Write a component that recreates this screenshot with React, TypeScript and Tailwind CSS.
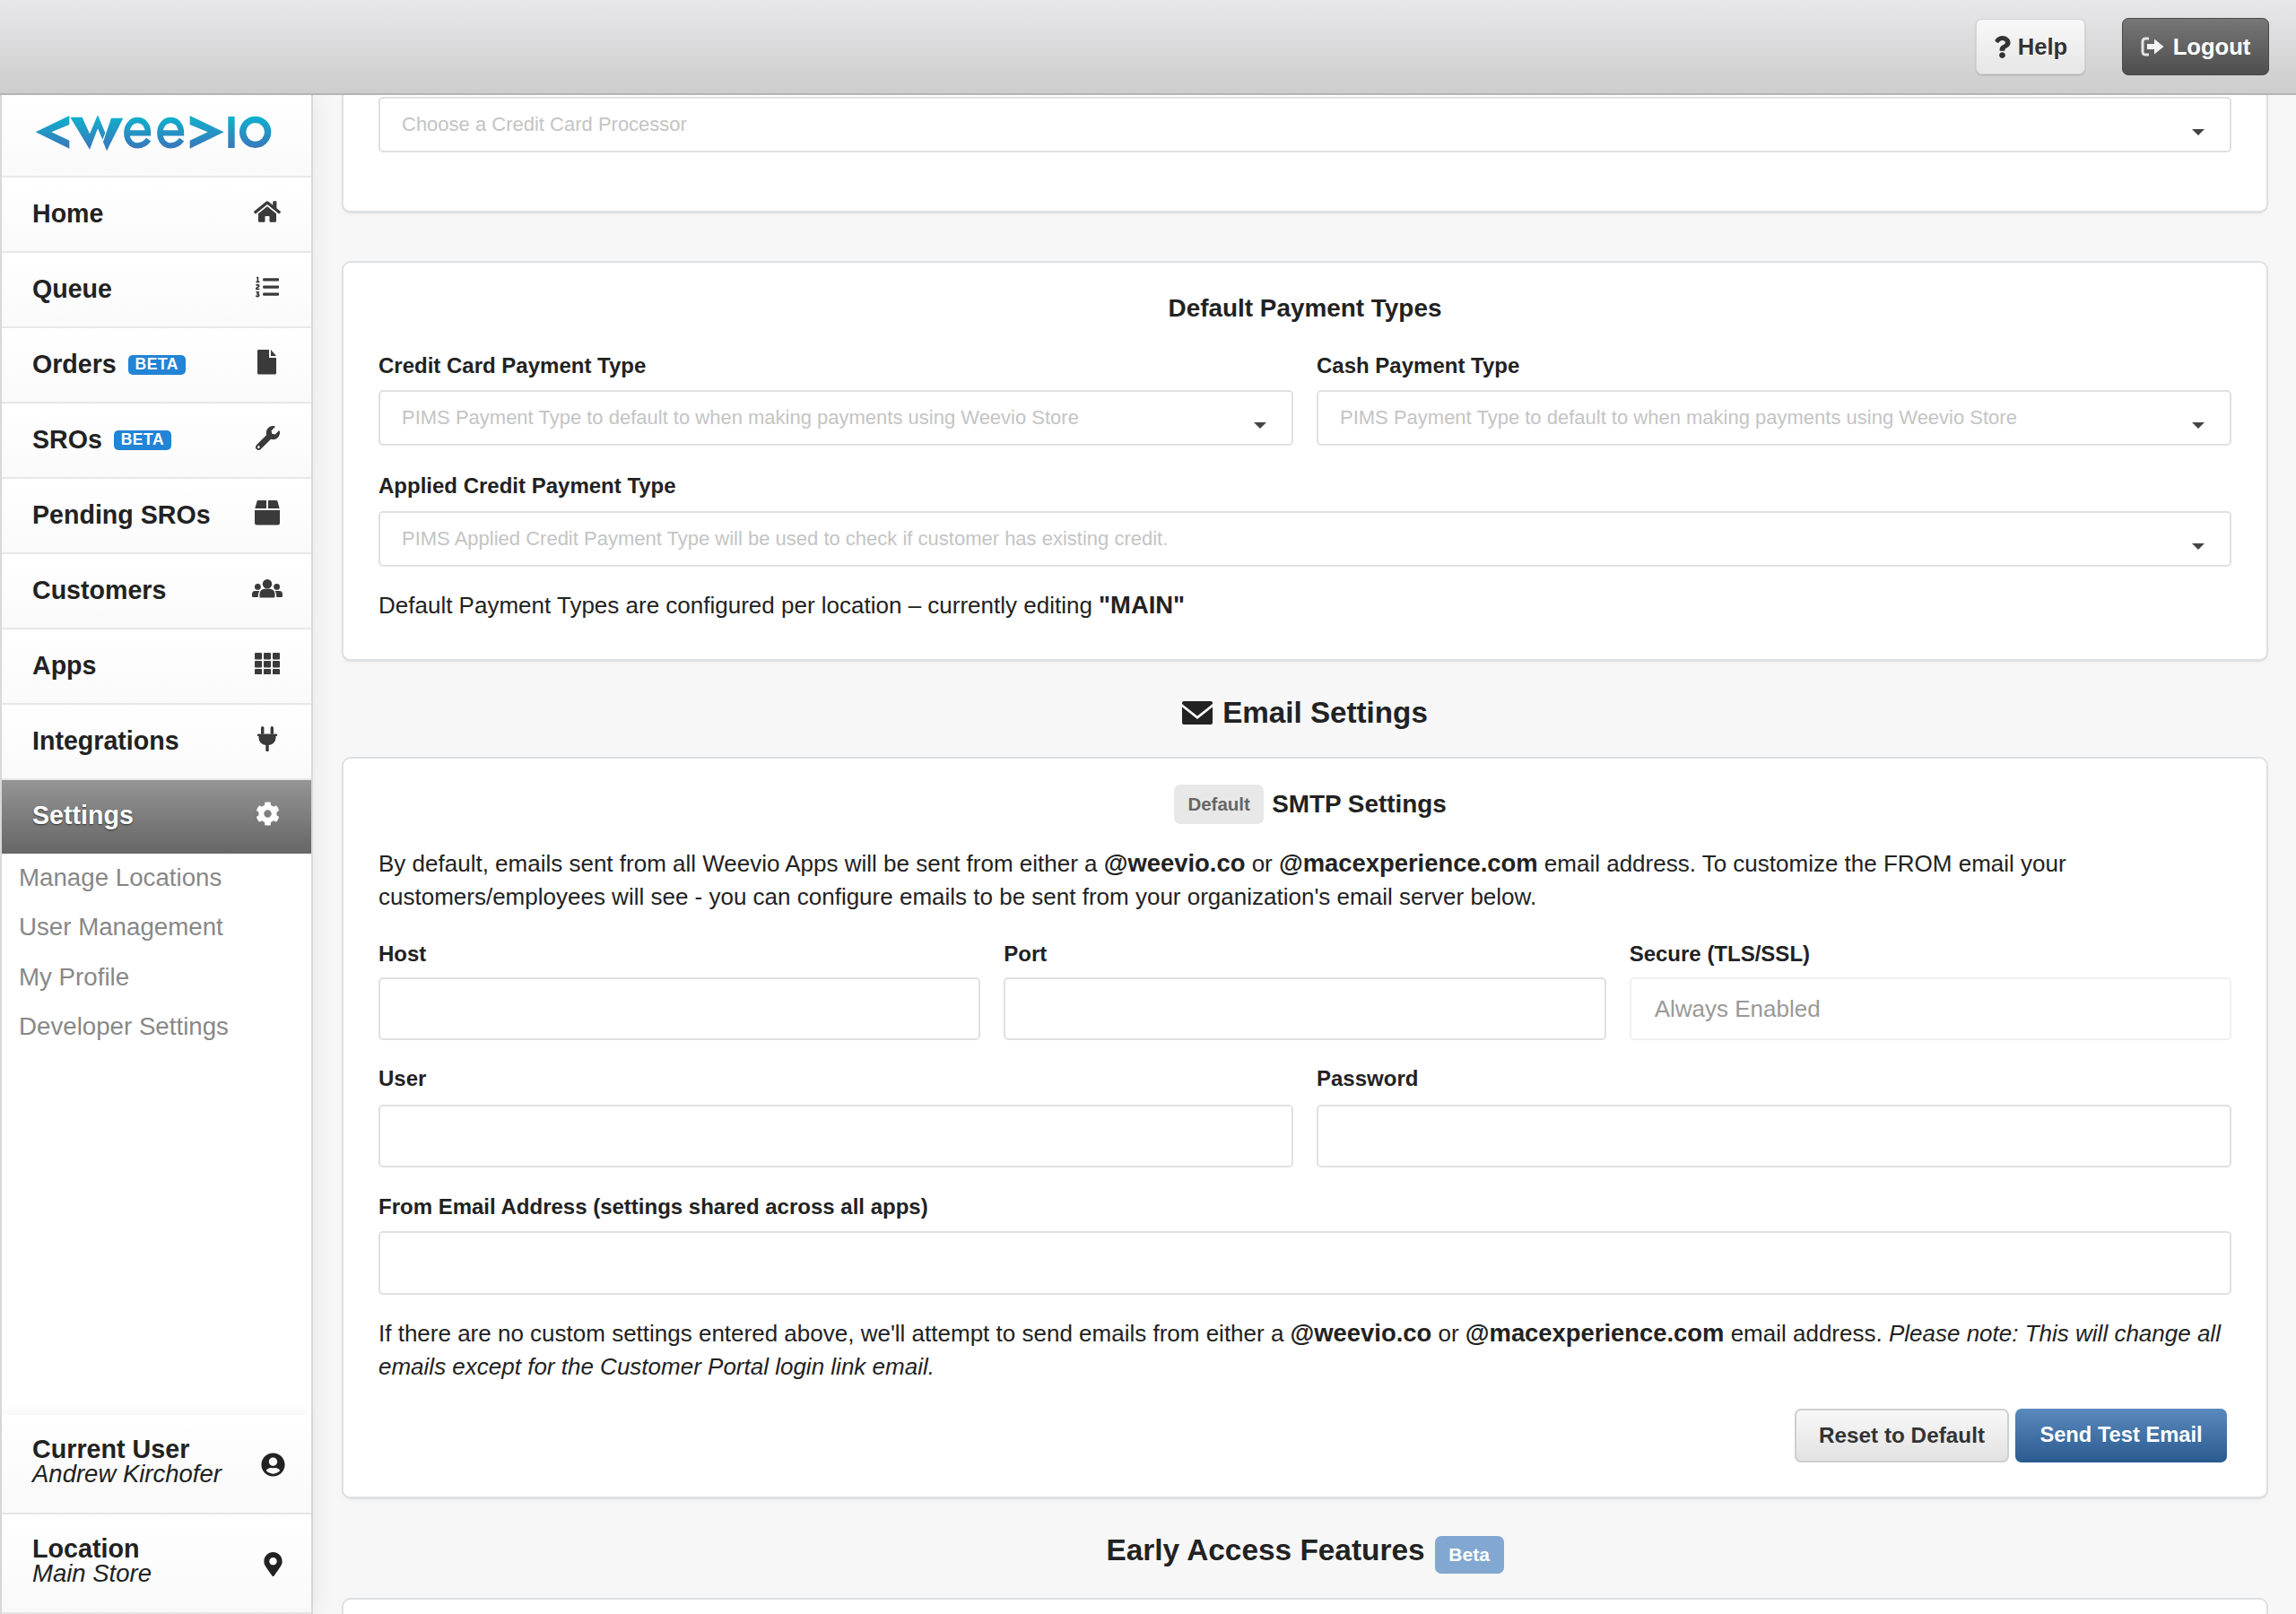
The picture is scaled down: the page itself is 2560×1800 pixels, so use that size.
import { FaCog, FaHome, FaListOl, FaMapMarkerAlt, FaQuestion, FaUserCircle, FaWrench } from 'react-icons/fa';
import type { ReactNode } from 'react';

function FileIcon() {
  return (
    <svg viewBox="0 0 22 28" className="h-[28px] w-[22px] shrink-0" fill="currentColor">
      <path d="M1 0H13V9H21V26a1.5 1.5 0 0 1-1.5 1.5H1.5A1.5 1.5 0 0 1 0 26V1A1 1 0 0 1 1 0Z" />
      <path d="M15 0L21 7H15Z" />
    </svg>
  );
}

function BoxIcon() {
  return (
    <svg viewBox="0 0 28 28" className="h-[28px] w-[28px] shrink-0" fill="currentColor">
      <path d="M4 0H13V9H0.3L2.5 1.2A1.8 1.8 0 0 1 4 0Z" />
      <path d="M15 0H24A1.8 1.8 0 0 1 25.5 1.2L27.7 9H15Z" />
      <path d="M0 11H28V25a2.5 2.5 0 0 1-2.5 2.5H2.5A2.5 2.5 0 0 1 0 25Z" />
    </svg>
  );
}

function UsersIcon() {
  return (
    <svg viewBox="0 0 34 21" className="h-[21px] w-[34px] shrink-0" fill="currentColor">
      <circle cx="17" cy="5.2" r="5.2" />
      <path d="M8.5 20.5V16a5.5 5.5 0 0 1 5.5-5.2h6a5.5 5.5 0 0 1 5.5 5.2v3a1.5 1.5 0 0 1-1.5 1.5Z" />
      <circle cx="6.4" cy="8.4" r="3.4" />
      <circle cx="27.6" cy="8.4" r="3.4" />
      <path d="M0 19v-2.5a3.6 3.6 0 0 1 3.6-3.4h4.8A7.5 7.5 0 0 0 6.8 18v2H1a1 1 0 0 1-1-1Z" />
      <path d="M34 19v-2.5a3.6 3.6 0 0 0-3.6-3.4h-4.8a7.5 7.5 0 0 1 1.6 4.9v2h5.8a1 1 0 0 0 1-1Z" />
    </svg>
  );
}

function GridIcon() {
  const cells = [0, 10, 20].flatMap((y) => [0, 10, 20].map((x) => [x, y]));
  return (
    <svg viewBox="0 0 28 24" className="h-[24px] w-[28px] shrink-0" fill="currentColor">
      {cells.map(([x, y]) => (
        <rect key={`${x}-${y}`} x={x} y={y - (y / 10) * 1} width="8" height="7.4" rx="1" />
      ))}
    </svg>
  );
}

function PlugIcon() {
  return (
    <svg viewBox="0 0 22 28" className="h-[28px] w-[22px] shrink-0" fill="currentColor">
      <rect x="4" y="0" width="3.4" height="9" rx="1.7" />
      <rect x="14.6" y="0" width="3.4" height="9" rx="1.7" />
      <path d="M0.8 8.5H21.2A0.8 0.8 0 0 1 22 9.3V11H20.5V13a8 8 0 0 1-7.8 7.9V27a0.9 0.9 0 0 1-0.9 0.9H10.2a0.9 0.9 0 0 1-0.9-0.9V20.9A8 8 0 0 1 1.5 13V11H0V9.3A0.8 0.8 0 0 1 0.8 8.5Z" />
    </svg>
  );
}

function MailIcon() {
  return (
    <svg viewBox="0 0 34 26" className="h-[26px] w-[34px] shrink-0" fill="currentColor">
      <path d="M2 0H32a2 2 0 0 1 2 2V3L17 16.5 0 3V2A2 2 0 0 1 2 0Z" />
      <path d="M0 6.5L17 20 34 6.5V24a2 2 0 0 1-2 2H2a2 2 0 0 1-2-2Z" />
    </svg>
  );
}

function LogoutIcon() {
  return (
    <svg viewBox="0 0 26 22" className="h-[22px] w-[26px] shrink-0" fill="none">
      <path d="M9 2H5a3 3 0 0 0-3 3v12a3 3 0 0 0 3 3h4" stroke="#e4e4e4" strokeWidth="3" />
      <path d="M7 8H15V2.5L25.5 11 15 19.5V14H7Z" fill="#f4f4f4" />
    </svg>
  );
}

function WeevioLogo() {
  return (
    <svg viewBox="0 0 870 195" className="h-[65px] w-[290px] shrink-0">
      <defs>
        <linearGradient id="logoGrad" gradientUnits="userSpaceOnUse" x1="0" y1="40" x2="0" y2="155">
          <stop offset="0" stopColor="#0db4ce" />
          <stop offset="1" stopColor="#3b74ba" />
        </linearGradient>
      </defs>
      <g fill="url(#logoGrad)">
        <path d="M32 97L145 42V72L85 97L145 125V152Z" />
        <path d="M148 47H188L213 103L240 40L265 100L256 122L240 85L213 155Z" />
        <path d="M285 50H325L270 160L258 130Z" />
        <path d="M548 42L662 97L548 152V125L608 97L548 72Z" />
        <rect x="676" y="45" width="22" height="105" />
      </g>
      <g fill="none" stroke="url(#logoGrad)" strokeWidth="19">
        <path d="M337 100H408C408 74 394 57 373 57C352 57 337 76 337 100C337 125 352 142 373 142C388 142 400 136 410 122" />
        <path d="M448 100H519C519 74 505 57 484 57C463 57 448 76 448 100C448 125 463 142 484 142C499 142 511 136 521 122" />
        <circle cx="767" cy="97" r="42" strokeWidth="22" />
      </g>
    </svg>
  );
}

function BetaTag({ children }: { children: ReactNode }) {
  return (
    <span className="ml-[13px] flex h-[22px] w-[64px] items-center justify-center rounded-[5px] bg-[#2284d5] text-[17.5px] font-bold tracking-[0.5px] text-white">
      {children}
    </span>
  );
}

const navItems: { label: string; beta?: boolean; icon: ReactNode }[] = [
  { label: 'Home', icon: <FaHome className="h-[30px] w-[30px] shrink-0" /> },
  { label: 'Queue', icon: <FaListOl className="h-[26px] w-[28px] shrink-0" /> },
  { label: 'Orders', beta: true, icon: <FileIcon /> },
  { label: 'SROs', beta: true, icon: <FaWrench className="h-[27px] w-[27px] shrink-0 -scale-x-100 rotate-90" /> },
  { label: 'Pending SROs', icon: <BoxIcon /> },
  { label: 'Customers', icon: <UsersIcon /> },
  { label: 'Apps', icon: <GridIcon /> },
  { label: 'Integrations', icon: <PlugIcon /> },
];

const subItems = ['Manage Locations', 'User Management', 'My Profile', 'Developer Settings'];

function Sidebar() {
  return (
    <aside className="relative z-10 flex h-full w-[349px] shrink-0 flex-col border-x-2 border-[#d9d9d9] bg-white shadow-[4px_0_22px_rgba(0,0,0,0.06)]">
      <div className="flex h-[92px] shrink-0 items-center justify-center border-b-2 border-[#e8e8e8] bg-gradient-to-b from-white to-[#fafafa] pb-[8px] pr-[2px]">
        <WeevioLogo />
      </div>
      {navItems.map((item) => (
        <div
          key={item.label}
          className="flex h-[84px] shrink-0 items-center border-b-2 border-[#e8e8e8] bg-gradient-to-b from-white to-[#fafafa] pb-[1px] pl-[34px] text-[#222222]"
        >
          <span className="text-[28.6px] font-bold">{item.label}</span>
          {item.beta && <BetaTag>BETA</BetaTag>}
          <span className="mb-[5px] ml-auto mr-[34px] flex w-[30px] justify-center text-[#3a3a3a]">{item.icon}</span>
        </div>
      ))}
      <div className="flex h-[82px] shrink-0 items-center bg-gradient-to-b from-[#959595] to-[#666666] pb-[4px] pl-[34px]">
        <span className="text-[28.6px] font-bold text-white [text-shadow:0_1px_2px_rgba(0,0,0,0.6)]">Settings</span>
        <span className="mb-[4px] ml-auto mr-[34px] flex w-[30px] justify-center text-white">
          <FaCog className="h-[27px] w-[27px] shrink-0" />
        </span>
      </div>
      <div className="-mt-px flex flex-col pl-[19px] text-[27.7px] text-[#888888]">
        {subItems.map((s) => (
          <div key={s} className="flex h-[55.5px] items-center">{s}</div>
        ))}
      </div>
      <div className="flex-1" />
      <div className="shadow-[0_-6px_12px_rgba(0,0,0,0.03)]">
        <FooterRow title="Current User" value="Andrew Kirchofer" icon={<FaUserCircle className="h-[27px] w-[27px] shrink-0" />} />
        <FooterRow title="Location" value="Main Store" icon={<FaMapMarkerAlt className="h-[27px] w-[27px] shrink-0" />} />
      </div>
    </aside>
  );
}

function FooterRow({ title, value, icon }: { title: string; value: string; icon: ReactNode }) {
  return (
    <div className="flex h-[111px] items-center border-b-2 border-[#e6e6e6] bg-gradient-to-b from-white to-[#f9f9f9] pl-[34px] text-[#222222]">
      <div className="mb-[5px] flex flex-col leading-[28px]">
        <span className="text-[28.7px] font-bold">{title}</span>
        <span className="text-[27.5px] italic">{value}</span>
      </div>
      <span className="ml-auto mr-[28px] mt-[2px] flex w-[30px] justify-center">{icon}</span>
    </div>
  );
}

function FieldLabel({ children, className }: { children: ReactNode; className?: string }) {
  return <div className={`flex h-[30px] items-center text-[24px] font-bold text-[#222222] ${className ?? ''}`}>{children}</div>;
}

function SelectBox({ placeholder }: { placeholder: string }) {
  return (
    <div className="relative flex h-[62px] items-center rounded-[5px] border-2 border-[#e0e0e0] bg-white pb-[1px] pl-[24px] text-[22px] text-[#c4c4c4]">
      {placeholder}
      <span className="absolute right-[28px] top-[34px] h-0 w-0 border-x-[7px] border-t-[7px] border-x-transparent border-t-[#444444]" />
    </div>
  );
}

function TextInput({ className }: { className: string }) {
  return <input className={`w-full rounded-[5px] border-2 border-[#e0e0e0] bg-white ${className}`} />;
}

function Bold({ children }: { children: ReactNode }) {
  return <strong className="text-[27.4px] font-bold">{children}</strong>;
}

export default function App() {
  return (
    <div className="flex h-[1800px] w-full flex-col overflow-hidden bg-[#f7f7f7] font-['Liberation_Sans',Arial,sans-serif] text-[#222222]">
      <header className="relative z-20 flex h-[106px] shrink-0 items-center justify-end gap-[41px] border-b-2 border-[#b5b5b5] bg-gradient-to-b from-[#e8e7ea] to-[#cdcdcd] pr-[30px]">
        <button className="flex h-[62px] w-[122px] items-center justify-center gap-[8px] rounded-[7px] border border-[#d5d5d5] bg-gradient-to-b from-[#f8f8f8] to-[#e6e6e6] text-[25.6px] font-bold text-[#333333] shadow-[0_1px_2px_rgba(0,0,0,0.2)] [text-shadow:0_1px_0_#ffffff]">
          <FaQuestion className="h-[25px] w-[19px] shrink-0" />
          Help
        </button>
        <button className="flex h-[64px] w-[164px] items-center justify-center gap-[10px] rounded-[7px] border border-[#4a4a4a] bg-gradient-to-b from-[#777777] to-[#4e4e4e] text-[25.6px] font-bold text-white">
          <LogoutIcon />
          Logout
        </button>
      </header>

      <div className="flex min-h-0 flex-1">
        <Sidebar />
        <main className="flex min-w-0 flex-1 flex-col overflow-hidden pl-[32px] pr-[31px]">
          <section className="h-[132px] shrink-0 rounded-b-[10px] border-x-2 border-b-[3px] border-[#dde1e5] bg-white px-[39px] pt-[2px] shadow-[0_2px_4px_rgba(0,0,0,0.03)]">
            <SelectBox placeholder="Choose a Credit Card Processor" />
          </section>

          <section className="mt-[53px] h-[447px] shrink-0 rounded-[10px] border-2 border-b-[3px] border-[#dde1e5] bg-white px-[39px] shadow-[0_2px_4px_rgba(0,0,0,0.03)]">
            <h3 className="mt-[35px] flex h-[32px] items-center justify-center text-[27.9px] font-bold">Default Payment Types</h3>
            <div className="mt-[33px] grid grid-cols-2 gap-x-[26px]">
              <div>
                <FieldLabel className="mb-[12px]">Credit Card Payment Type</FieldLabel>
                <SelectBox placeholder="PIMS Payment Type to default to when making payments using Weevio Store" />
              </div>
              <div>
                <FieldLabel className="mb-[12px]">Cash Payment Type</FieldLabel>
                <SelectBox placeholder="PIMS Payment Type to default to when making payments using Weevio Store" />
              </div>
            </div>
            <FieldLabel className="mb-[13px] mt-[30px]">Applied Credit Payment Type</FieldLabel>
            <SelectBox placeholder="PIMS Applied Credit Payment Type will be used to check if customer has existing credit." />
            <p className="mt-[24px] text-[26px] leading-[37px]">
              Default Payment Types are configured per location – currently editing <Bold>"MAIN"</Bold>
            </p>
          </section>

          <h2 className="mt-[39px] flex h-[36px] shrink-0 items-center justify-center gap-[11px] text-[33.2px] font-bold">
            <MailIcon />
            Email Settings
          </h2>

          <section className="mt-[31px] h-[828px] shrink-0 rounded-[10px] border-2 border-b-[3px] border-[#dde1e5] bg-white px-[39px] shadow-[0_2px_4px_rgba(0,0,0,0.03)]">
            <div className="mt-[29px] flex h-[44px] items-center justify-center gap-[9px] pl-[12px]">
              <span className="flex h-[44px] w-[100px] items-center justify-center rounded-[7px] bg-[#e8e8e8] text-[20.5px] font-bold text-[#666666]">Default</span>
              <span className="text-[27.9px] font-bold">SMTP Settings</span>
            </div>
            <p className="mt-[25px] text-[26px] leading-[37px]">
              By default, emails sent from all Weevio Apps will be sent from either a <Bold>@weevio.co</Bold> or <Bold>@macexperience.com</Bold> email
              address. To customize the FROM email your customers/employees will see - you can configure emails to be sent from your organization's email server below.
            </p>
            <div className="mt-[30px] grid grid-cols-3 gap-x-[26px]">
              <div>
                <FieldLabel className="mb-[11px]">Host</FieldLabel>
                <TextInput className="h-[70px]" />
              </div>
              <div>
                <FieldLabel className="mb-[11px]">Port</FieldLabel>
                <TextInput className="h-[70px]" />
              </div>
              <div>
                <FieldLabel className="mb-[11px]">Secure (TLS/SSL)</FieldLabel>
                <input
                  disabled
                  placeholder="Always Enabled"
                  className="h-[70px] w-full rounded-[5px] border-2 border-[#f0f0f0] bg-white pl-[26px] text-[26px] placeholder:text-[#999999]"
                />
              </div>
            </div>
            <div className="mt-[28px] grid grid-cols-2 gap-x-[26px]">
              <div>
                <FieldLabel className="mb-[14px]">User</FieldLabel>
                <TextInput className="h-[70px]" />
              </div>
              <div>
                <FieldLabel className="mb-[14px]">Password</FieldLabel>
                <TextInput className="h-[70px]" />
              </div>
            </div>
            <FieldLabel className="mb-[12px] mt-[29px]">From Email Address (settings shared across all apps)</FieldLabel>
            <TextInput className="h-[71px]" />
            <p className="mt-[24px] text-[26px] leading-[37px]">
              If there are no custom settings entered above, we'll attempt to send emails from either a <Bold>@weevio.co</Bold> or <Bold>@macexperience.com</Bold> email
              address. <em>Please note: This will change all emails except for the Customer Portal login link email.</em>
            </p>
            <div className="mt-[28px] flex justify-end gap-[7px] pr-[5px]">
              <button className="h-[60px] w-[239px] rounded-[7px] border-2 border-[#cfcfcf] bg-gradient-to-b from-[#f8f8f8] to-[#e2e2e2] text-[24.3px] font-bold text-[#333333]">
                Reset to Default
              </button>
              <button className="h-[60px] w-[236px] rounded-[7px] bg-gradient-to-b from-[#5a8abd] to-[#2a5a8f] text-[23.7px] font-bold text-white">
                Send Test Email
              </button>
            </div>
          </section>

          <h2 className="mt-[36px] flex h-[42px] shrink-0 items-center justify-center gap-[11px] text-[33.4px] font-bold">
            Early Access Features
            <span className="mt-[10px] flex h-[42px] w-[77px] items-center justify-center rounded-[7px] bg-[#82a7d0] text-[21px] font-bold text-white">Beta</span>
          </h2>

          <section className="mt-[32px] h-[100px] shrink-0 rounded-[10px] border-2 border-[#dde1e5] bg-white" />
        </main>
      </div>
    </div>
  );
}
